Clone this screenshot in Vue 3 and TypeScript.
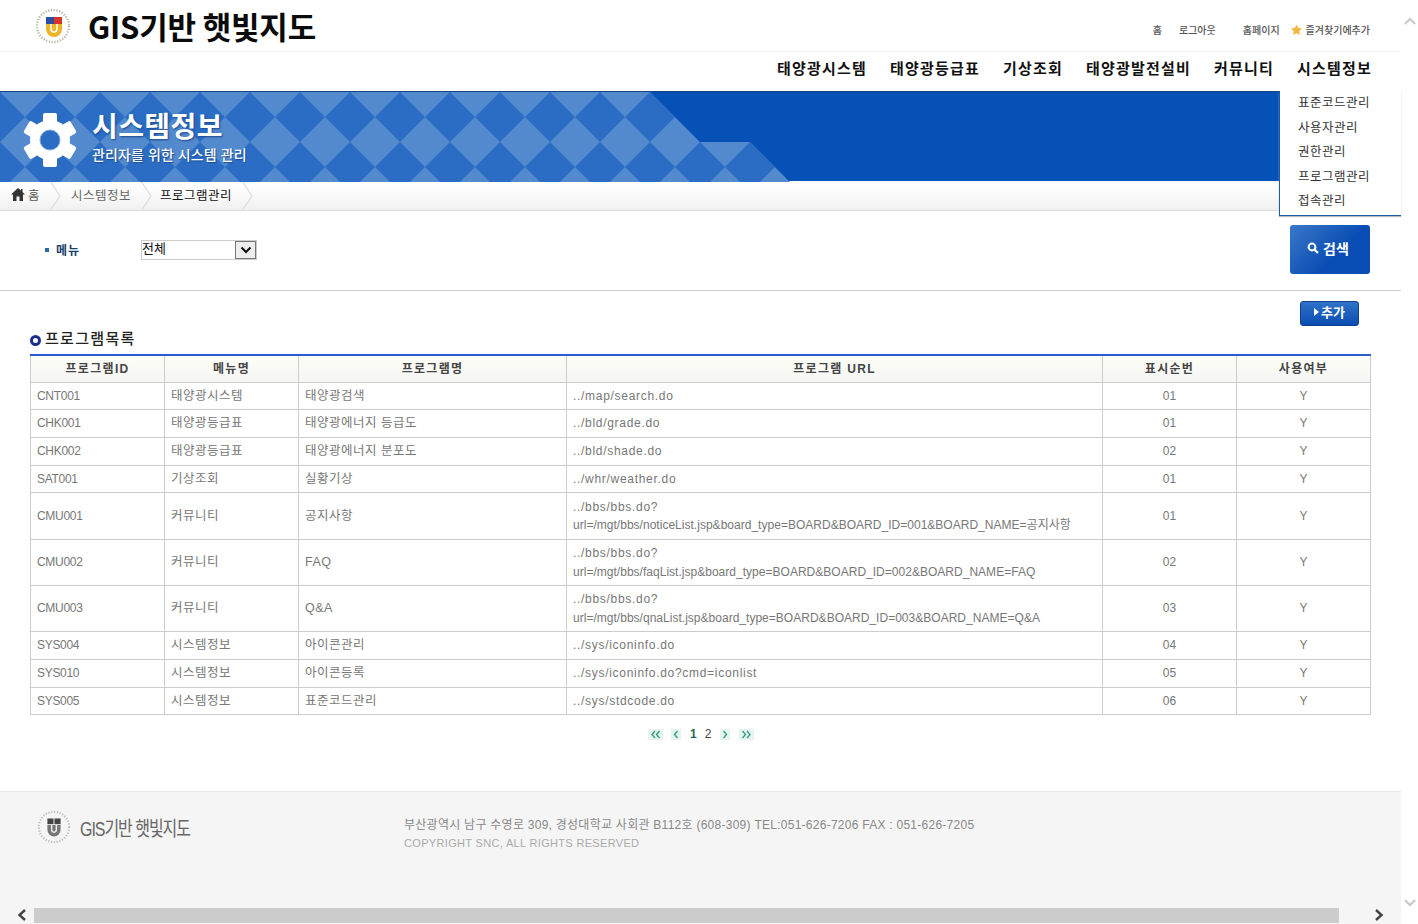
<template>
  <div class="page">
    <div class="main">
      <header class="top">
        <div class="brand">
          <svg class="emblem" width="36" height="36" viewBox="0 0 36 36">
            <circle cx="18" cy="18" r="16" fill="none" stroke="#b5b5a0" stroke-width="2.4" stroke-dasharray="1.2 1.6" />
            <rect x="11" y="9" width="8" height="7" fill="#2b4f9e" />
            <rect x="19" y="9" width="8" height="7" fill="#d8322c" />
            <path d="M11 16h16v5a8 8 0 0 1-16 0z" fill="#f0b428" />
            <path d="M16 16v5a3 3 0 0 0 6 0v-5" fill="none" stroke="#fff" stroke-width="1.5" />
          </svg>
          <span class="brand-name">GIS기반 햇빛지도</span>
        </div>
        <div class="util">
          <span class="u-home">홈</span>
          <span class="u-out">로그아웃</span>
          <span class="u-page">홈페이지</span>
          <svg width="13" height="12" viewBox="0 0 24 24"><path d="M12 1l3.4 7.2 7.6 1-5.6 5.3 1.5 7.7L12 18.300l-6.900 3.900 1.500-7.700L1 9.200l7.600-1z" fill="#f0b840" /></svg>
          <span class="u-fav">즐겨찾기에추가</span>
        </div>
      </header>

      <nav class="gnb">
        <a v-for="m in gnb" :key="m">{{ m }}</a>
      </nav>

      <section class="banner">
        <svg class="banner-bg" width="800" height="90" viewBox="0 0 800 90">
          <defs>
            <pattern id="chk" x="-25" y="0" width="50" height="50" patternUnits="userSpaceOnUse">
              <rect width="50" height="50" fill="#5389cd" />
              <polygon points="25,0 50,25 25,50 0,25" fill="#2b6dc4" />
            </pattern>
          </defs>
          <polygon points="0,0 650,0 700,50 750,50 790,90 0,90" fill="url(#chk)" />
        </svg>
        <svg class="gear" width="56" height="56" viewBox="0 0 56 56">
          <g fill="#fff">
            <circle cx="28" cy="28" r="20" />
            <rect v-for="a in [0, 60, 120, 180, 240, 300]" :key="a" x="21" y="1" width="14" height="14" rx="2" :transform="`rotate(${a} 28 28)`" />
          </g>
          <circle cx="28" cy="28" r="10" fill="#2b6dc4" stroke="#7fa6dc" stroke-width="1" />
        </svg>
        <div class="banner-text">
          <h1>시스템정보</h1>
          <p>관리자를 위한 시스템 관리</p>
        </div>
        <ul class="submenu">
          <li v-for="s in subMenu" :key="s">{{ s }}</li>
        </ul>
      </section>

      <div class="crumbs">
        <svg class="home" width="14" height="13" viewBox="0 0 14 13"><path d="M7 0L0 6.500h2V13h3.500V8.500h3V13H12V6.500h2L11.500 4V1H10v1.500z" fill="#333" /></svg>
        <span class="c-home">홈</span>
        <svg class="chev" width="12" height="30" viewBox="0 0 12 30"><path d="M1 0l10 15L1 30" fill="none" stroke="#ddd" stroke-width="1.200" /></svg>
        <span class="c-mid">시스템정보</span>
        <svg class="chev" width="12" height="30" viewBox="0 0 12 30"><path d="M1 0l10 15L1 30" fill="none" stroke="#ddd" stroke-width="1.200" /></svg>
        <span class="c-cur">프로그램관리</span>
        <svg class="chev" width="12" height="30" viewBox="0 0 12 30"><path d="M1 0l10 15L1 30" fill="none" stroke="#ddd" stroke-width="1.200" /></svg>
      </div>

      <div class="search">
        <i class="dot"></i>
        <label>메뉴</label>
        <div class="fake-select">
          <span>전체</span>
          <b><svg width="12" height="8" viewBox="0 0 12 8"><path d="M1.500 1.500L6 6l4.500-4.500" fill="none" stroke="#111" stroke-width="2" /></svg></b>
        </div>
        <button class="btn-search">
          <svg width="12" height="12" viewBox="0 0 12 12"><circle cx="5" cy="5" r="3.400" fill="none" stroke="#fff" stroke-width="2" /><path d="M7.500 7.500L11 11" stroke="#fff" stroke-width="2.200" /></svg>
          검색
        </button>
      </div>

      <div class="content">
        <div class="add-row">
          <button class="btn-add"><svg width="5" height="8" viewBox="0 0 5 8"><path d="M0 0l5 4-5 4z" fill="#fff" /></svg>추가</button>
        </div>
        <h2><i></i>프로그램목록</h2>
        <table>
          <colgroup>
            <col class="c1" /><col class="c2" /><col class="c3" /><col class="c4" /><col class="c5" /><col class="c6" />
          </colgroup>
          <thead>
            <tr>
              <th v-for="h in heads" :key="h">{{ h }}</th>
            </tr>
          </thead>
          <tbody>
            <tr v-for="r in rows" :key="r.id" :style="{ height: r.h + 'px' }">
              <td class="id">{{ r.id }}</td>
              <td class="k">{{ r.menu }}</td>
              <td class="k">{{ r.name }}</td>
              <td class="url">{{ r.url }}<span v-if="r.url2" class="url2">{{ r.url2 }}</span></td>
              <td class="ctr">{{ r.seq }}</td>
              <td class="ctr">Y</td>
            </tr>
          </tbody>
        </table>
        <div class="pager">
          <svg class="pg" width="15" height="11" viewBox="0 0 15 11"><rect width="15" height="11" fill="#e6f3ef" /><path d="M7 2L4 5.500 7 9M11.500 2l-3 3.500 3 3.500" fill="none" stroke="#2f9c84" stroke-width="1.300" /></svg>
          <svg class="pg p2" width="10" height="11" viewBox="0 0 10 11"><rect width="10" height="11" fill="#e6f3ef" /><path d="M6.500 2l-3 3.500 3 3.500" fill="none" stroke="#2f9c84" stroke-width="1.300" /></svg>
          <span class="on">1</span>
          <span class="off">2</span>
          <svg class="pg p3" width="10" height="11" viewBox="0 0 10 11"><rect width="10" height="11" fill="#e6f3ef" /><path d="M3.500 2l3 3.500-3 3.500" fill="none" stroke="#2f9c84" stroke-width="1.300" /></svg>
          <svg class="pg p4" width="15" height="11" viewBox="0 0 15 11"><rect width="15" height="11" fill="#e6f3ef" /><path d="M3.500 2l3 3.500-3 3.500M8 2l3 3.500L8 9" fill="none" stroke="#2f9c84" stroke-width="1.300" /></svg>
        </div>
      </div>

      <footer class="foot">
        <div class="foot-body">
          <div class="foot-logo">
            <svg width="34" height="36" viewBox="0 0 36 36">
              <circle cx="18" cy="18" r="16" fill="none" stroke="#bbb" stroke-width="2.400" stroke-dasharray="1.200 1.800" />
              <rect x="11" y="9" width="6.500" height="6" fill="#444" />
              <rect x="18.500" y="9" width="6.500" height="6" fill="#444" />
              <path d="M11 16h14v5a7 7 0 0 1-14 0z" fill="#777" />
              <path d="M15.500 16v5a2.500 2.500 0 0 0 5 0v-5" fill="none" stroke="#eee" stroke-width="1.500" />
            </svg>
            <span>GIS기반 햇빛지도</span>
          </div>
          <div class="foot-info">
            <p>부산광역시 남구 수영로 309, 경성대학교 사회관 B112호 (608-309) TEL:051-626-7206 FAX : 051-626-7205</p>
            <p class="copy">COPYRIGHT SNC, ALL RIGHTS RESERVED</p>
          </div>
        </div>
        <div class="hbar">
          <svg width="12" height="14" viewBox="0 0 12 14"><path d="M9 2L3.500 7 9 12" fill="none" stroke="#444" stroke-width="2.400" /></svg>
          <div class="thumb"></div>
          <svg width="12" height="14" viewBox="0 0 12 14"><path d="M3 2l5.500 5L3 12" fill="none" stroke="#444" stroke-width="2.400" /></svg>
        </div>
      </footer>
    </div>
    <aside class="vbar">
      <svg width="14" height="10" viewBox="0 0 14 10"><path d="M2 8l5-5 5 5" fill="none" stroke="#ccc" stroke-width="2.400" /></svg>
      <svg width="14" height="10" viewBox="0 0 14 10"><path d="M2 2l5 5 5-5" fill="none" stroke="#ccc" stroke-width="2.400" /></svg>
    </aside>
  </div>
</template>

<script setup lang="ts">
interface Row {
  id: string
  menu: string
  name: string
  url: string
  url2?: string
  seq: string
  h: number
}

const gnb = ['태양광시스템', '태양광등급표', '기상조회', '태양광발전설비', '커뮤니티', '시스템정보'];
const subMenu = ['표준코드관리', '사용자관리', '권한관리', '프로그램관리', '접속관리'];
const heads = ['프로그램ID', '메뉴명', '프로그램명', '프로그램 URL', '표시순번', '사용여부'];

const rows: Row[] = [
  { id: 'CNT001', menu: '태양광시스템', name: '태양광검색', url: '../map/search.do', seq: '01', h: 27 },
  { id: 'CHK001', menu: '태양광등급표', name: '태양광에너지 등급도', url: '../bld/grade.do', seq: '01', h: 28 },
  { id: 'CHK002', menu: '태양광등급표', name: '태양광에너지 분포도', url: '../bld/shade.do', seq: '02', h: 28 },
  { id: 'SAT001', menu: '기상조회', name: '실황기상', url: '../whr/weather.do', seq: '01', h: 27 },
  { id: 'CMU001', menu: '커뮤니티', name: '공지사항', url: '../bbs/bbs.do?', url2: 'url=/mgt/bbs/noticeList.jsp&board_type=BOARD&BOARD_ID=001&BOARD_NAME=공지사항', seq: '01', h: 47 },
  { id: 'CMU002', menu: '커뮤니티', name: 'FAQ', url: '../bbs/bbs.do?', url2: 'url=/mgt/bbs/faqList.jsp&board_type=BOARD&BOARD_ID=002&BOARD_NAME=FAQ', seq: '02', h: 46 },
  { id: 'CMU003', menu: '커뮤니티', name: 'Q&A', url: '../bbs/bbs.do?', url2: 'url=/mgt/bbs/qnaList.jsp&board_type=BOARD&BOARD_ID=003&BOARD_NAME=Q&A', seq: '03', h: 46 },
  { id: 'SYS004', menu: '시스템정보', name: '아이콘관리', url: '../sys/iconinfo.do', seq: '04', h: 28 },
  { id: 'SYS010', menu: '시스템정보', name: '아이콘등록', url: '../sys/iconinfo.do?cmd=iconlist', seq: '05', h: 28 },
  { id: 'SYS005', menu: '시스템정보', name: '표준코드관리', url: '../sys/stdcode.do', seq: '06', h: 27 },
];
</script>

<style scoped>
.page {
  display: flex;
  width: 1418px;
  height: 924px;
  overflow: hidden;
  background: #fff;
  color: #777;
  font-family: "Liberation Sans", "Noto Sans CJK KR", sans-serif;
  font-size: 12px;
}
.main {
  width: 1401px;
  display: flex;
  flex-direction: column;
}
.vbar {
  width: 17px;
  display: flex;
  flex-direction: column;
  justify-content: space-between;
  align-items: center;
  padding: 16px 0 16px;
  box-sizing: border-box;
}

.top {
  height: 52px;
  box-sizing: border-box;
  border-bottom: 1px solid #f3f3f3;
  display: flex;
  justify-content: space-between;
  align-items: center;
  padding: 0 31px 0 35px;
}
.brand {
  display: flex;
  align-items: center;
  gap: 17px;
}
.brand-name {
  font-family: "Noto Sans CJK KR", sans-serif;
  font-size: 31px;
  font-weight: 700;
  color: #0a0a0a;
  letter-spacing: -0.2px;
  line-height: 36px;
}
.util {
  display: flex;
  align-items: center;
  font-size: 10px;
  color: #555;
  padding-top: 8px;
  font-weight: 500;
}
.u-home { margin-right: 17px; }
.u-out { margin-right: 27px; }
.u-page { margin-right: 10px; }
.u-fav { margin-left: 3px; }

.gnb {
  height: 39px;
  box-sizing: border-box;
  display: flex;
  justify-content: flex-end;
  align-items: center;
  gap: 23px;
  padding: 0 29px 8px 0;
}
.gnb a {
  font-size: 15px;
  font-weight: 700;
  letter-spacing: 1.200px;
  color: #111;
  font-family: "Noto Sans CJK KR", sans-serif;
}

.banner {
  position: relative;
  height: 90px;
  background: #0551b5;
  border-top: 1px solid #12437f;
  box-sizing: border-box;
  display: flex;
  align-items: flex-start;
}
.banner-bg {
  position: absolute;
  left: 0;
  top: 0;
}
.gear {
  position: relative;
  margin: 20px 0 0 22px;
}
.banner-text {
  position: relative;
  margin-left: 14px;
  padding-top: 19px;
  color: #fff;
}
.banner-text h1 {
  margin: 0;
  font-size: 28px;
  line-height: 34px;
  font-weight: 700;
  letter-spacing: 0.400px;
  text-shadow: 1px 1px 2px #1b4a90;
}
.banner-text p {
  margin: 0;
  font-size: 14px;
  line-height: 20px;
  font-weight: 500;
  letter-spacing: 0.100px;
  text-shadow: 1px 1px 1px #1b4a90;
}
.submenu {
  position: absolute;
  z-index: 2;
  left: 1279px;
  top: -1px;
  width: 122px;
  height: 125px;
  margin: 0;
  padding: 0 0 0 18px;
  box-sizing: border-box;
  list-style: none;
  background: #fff;
  border-left: 1px solid #1d5cab;
  border-bottom: 1px solid #1d5cab;
  color: #333;
  box-shadow: 0 1px 1px #bbb;
  font-size: 12.500px;
  letter-spacing: 0.500px;
}
.submenu li {
  height: 24.600px;
  line-height: 24.600px;
}

.crumbs {
  height: 30px;
  box-sizing: border-box;
  border-bottom: 1px solid #ddd;
  background: linear-gradient(#fff 20%, #f0f0f0);
  display: flex;
  align-items: center;
  padding-left: 11px;
  font-size: 12.500px;
  letter-spacing: 0.500px;
}
.crumbs span { padding-bottom: 3px; }
.crumbs .home { margin-right: 3px; margin-bottom: 2px; }
.c-home { color: #555; }
.crumbs .chev { margin: 0 0 0 9px; }
.c-mid { margin-left: 10px; color: #666; }
.c-cur { margin-left: 8px; color: #111; }

.search {
  height: 80px;
  box-sizing: border-box;
  border-bottom: 1px solid #ccc;
  display: flex;
  align-items: center;
  padding: 0 31px 2px 45px;
}
.dot {
  width: 4px;
  height: 4px;
  background: #2b6aa8;
  margin-right: 7px;
}
.search label {
  width: 85px;
  color: #1c3f6e;
  font-weight: 700;
  letter-spacing: 1px;
}
.fake-select {
  width: 116px;
  height: 20px;
  box-sizing: border-box;
  border: 1px solid #ccc;
  display: flex;
  justify-content: space-between;
  align-items: stretch;
  color: #111;
  font-size: 13px;
  line-height: 15px;
}
.fake-select b {
  width: 19px;
  border: 1px solid #777;
  background: #eee;
  display: flex;
  align-items: center;
  justify-content: center;
}
.btn-search {
  margin-left: auto;
  width: 80px;
  height: 49px;
  border: 0;
  border-radius: 3px;
  background: linear-gradient(135deg, #3a78c8, #0a4db4 60%);
  color: #fff;
  font: 700 14px "Noto Sans CJK KR", sans-serif;
  display: flex;
  align-items: center;
  justify-content: center;
  gap: 4px;
  padding: 0 4px 3px 0;
}

.content {
  padding: 0 30px;
}
.add-row {
  display: flex;
  justify-content: flex-end;
  padding: 10px 12px 0 0;
}
.btn-add {
  width: 59px;
  height: 25px;
  border: 1px solid #0c3f8c;
  border-radius: 3px;
  background: linear-gradient(#2f72c8, #0a4db0);
  color: #fff;
  font: 700 13px "Noto Sans CJK KR", sans-serif;
  display: flex;
  align-items: center;
  justify-content: center;
  gap: 2px;
  padding: 0 0 4px;
}
h2 {
  margin: 0 0 5px;
  padding-top: 1px;
  font-size: 15px;
  line-height: 22px;
  font-weight: 500;
  letter-spacing: 1.300px;
  color: #222;
  display: flex;
  align-items: center;
  font-family: "Noto Sans CJK KR", sans-serif;
}
h2 i {
  width: 5px;
  height: 5px;
  border: 3px solid #1c2f8c;
  border-radius: 50%;
  margin: 4px 4px 0 0;
}
table {
  width: 1341px;
  table-layout: fixed;
  border-collapse: collapse;
  border-top: 2px solid #2a5bd0;
}
.c1, .c2, .c5, .c6 { width: 134px; }
.c3 { width: 268px; }
.c4 { width: 536px; }
th {
  height: 23px;
  padding: 0 0 3px;
  border: 1px solid #ccc;
  border-top: 0;
  background: linear-gradient(#fdfdf6, #f5f5f5);
  color: #444;
  font-size: 12px;
  font-weight: 700;
  letter-spacing: 1.300px;
}
td {
  padding: 0 6px;
  border: 1px solid #ccc;
  line-height: 18.500px;
  color: #777;
}
td.id { letter-spacing: -0.300px; }
td.k { font-size: 12.500px; letter-spacing: 0.500px; }
td.url { letter-spacing: 0.700px; }
.url2 { display: block; letter-spacing: 0.020px; white-space: nowrap; }
td.ctr { text-align: center; padding: 0; }
.pager {
  display: flex;
  justify-content: flex-start;
  align-items: center;
  height: 14px;
  margin: 12px 0 0 618px;
  color: #444;
}
.pg.p2 { margin-left: 8px; }
.on { margin-left: 9px; color: #1f6a58; font-weight: 700; }
.off { margin-left: 8px; }
.pg.p3 { margin-left: 9px; }
.pg.p4 { margin-left: 9px; }

.foot {
  flex: 1;
  margin-top: 50px;
  background: #f5f5f5;
  border-top: 1px solid #e6e6e6;
  display: flex;
  flex-direction: column;
}
.foot-body {
  display: flex;
  align-items: flex-start;
  padding: 17px 0 0 37px;
}
.foot-logo {
  width: 367px;
  display: flex;
  align-items: center;
  gap: 9px;
  color: #666;
  font-size: 20px;
  letter-spacing: -1.300px;
}
.foot-logo span {
  display: inline-block;
  transform: scaleX(0.8);
  transform-origin: left center;
}
.foot-info {
  padding-top: 7px;
  color: #888;
}
.foot-info p {
  margin: 0;
  line-height: 18px;
  letter-spacing: 0.260px;
}
.foot-info .copy {
  color: #aaa;
  font-size: 11px;
  letter-spacing: 0.330px;
}
.hbar {
  margin-top: auto;
  display: flex;
  align-items: center;
  height: 16px;
  padding: 0 16px 1px;
}
.thumb {
  width: 1305px;
  height: 15px;
  margin: 0 34px 0 6px;
  background: #ccc;
}
</style>

<style>
html, body { margin: 0; overflow: hidden; }
</style>
